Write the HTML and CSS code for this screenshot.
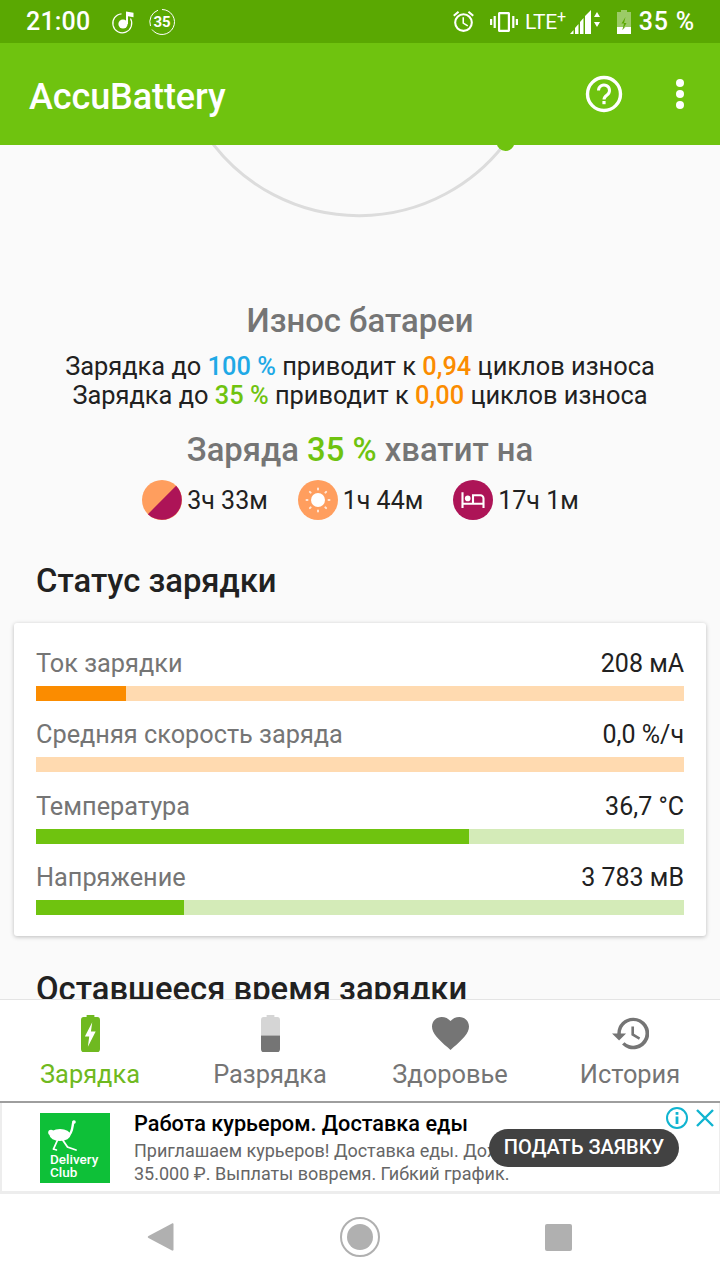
FILE: index.html
```html
<!DOCTYPE html>
<html lang="ru">
<head>
  <meta charset="UTF-8">
  <title>AccuBattery</title>
  <link rel="stylesheet" href="styles.css">
</head>
<body>
<div class="page">

  <!-- Status bar -->
  <div class="status-bar">
    <div class="status-left">
      <span class="clock">21:00</span>
      <svg class="note-icon" width="26" height="26" viewBox="0 0 26 26">
        <path d="M20.500 9.500A9.500 9.500 0 1 1 11.500 4.800" fill="none" stroke="#fff" stroke-width="1.200"/>
        <circle cx="13" cy="15" r="4.600" fill="#fff"/>
        <path d="M16 15V2.500l7.500 1.200v4.600l-5.500-1V15z" fill="#fff"/>
      </svg>
      <svg class="ring-icon" width="28" height="28" viewBox="0 0 28 28">
        <path d="M14 1.500A12.500 12.500 0 1 1 4 21.500M2.500 18A12.500 12.500 0 0 1 10 2.200" fill="none" stroke="#fff" stroke-width="1"/>
        <text x="14" y="19" text-anchor="middle" class="ring-num">35</text>
      </svg>
    </div>
    <div class="status-right">
      <svg width="25" height="25" viewBox="0 0 24 24" fill="#fff">
        <path d="M22 5.700l-4.600-3.900-1.300 1.500 4.600 3.900L22 5.700zM7.900 3.400L6.600 1.900 2 5.700l1.300 1.500 4.600-3.800zM12.500 8H11v6l4.700 2.900.8-1.200-4-2.400V8zM12 4a9 9 0 1 0 0 18 9 9 0 0 0 0-18zm0 16a7 7 0 1 1 0-14 7 7 0 0 1 0 14z"/>
      </svg>
      <svg class="vibrate" width="30" height="24" viewBox="0 0 30 24" fill="#fff">
        <path d="M10.500 2h9c.8 0 1.500.7 1.500 1.500v17c0 .8-.7 1.500-1.500 1.500h-9C9.700 22 9 21.300 9 20.500v-17C9 2.700 9.700 2 10.500 2zm.7 2.200v15.600h7.600V4.200z"/>
        <rect x="4.600" y="6" width="2.200" height="12"/><rect x="23.200" y="6" width="2.200" height="12"/>
        <rect x="1" y="9" width="2.200" height="6"/><rect x="26.800" y="9" width="2.200" height="6"/>
      </svg>
      <span class="lte">LTE<sup>+</sup></span>
      <svg class="signal" width="33" height="26" viewBox="0 0 33 26" fill="#fff">
        <path d="M1 25l3.500-4v4zM6 25v-6l3.500-4v10zM11 25V13l3.500-4v16zM16 25V7l6-6v24z"/>
        <path d="M28 3l3 5h-6zM28 18l-3-5h6z"/>
      </svg>
      <svg class="batt" width="14" height="26" viewBox="0 0 14 26">
        <path d="M4 1h6v2h4v22H0V3h4z" fill="#fff" fill-opacity=".4"/>
        <path d="M0 18h6l-.5 3 3-3H14v7H0z" fill="#fff"/>
        <path d="M8.500 8l-4 6.500h2.500L5.500 21l4-7H7z" fill="#5aa802"/>
      </svg>
      <span class="percent">35 %</span>
    </div>
  </div>

  <!-- App bar -->
  <div class="app-bar">
    <span class="app-title">AccuBattery</span>
    <div class="app-actions">
      <svg width="38" height="38" viewBox="0 0 38 38">
        <circle cx="19" cy="19" r="16.500" fill="none" stroke="#fff" stroke-width="3.400"/>
        <path d="M13.500 15.500a5.500 5.500 0 1 1 8.600 4.500c-1.700 1.200-3.100 2.200-3.100 4.500" fill="none" stroke="#fff" stroke-width="3"/>
        <rect x="17.400" y="26" width="3.200" height="3.200" fill="#fff"/>
      </svg>
      <div class="dots"><i></i><i></i><i></i></div>
    </div>
  </div>

  <!-- Scrolling content -->
  <div class="content">
    <div class="gauge">
      <svg width="720" height="76" viewBox="0 0 720 76">
        <path d="M213 -1A 184 184 0 0 0 506 -3" fill="none" stroke="#dcdcdc" stroke-width="3"/>
        <circle cx="505.500" cy="-3" r="9" fill="#6fc30f"/>
      </svg>
    </div>

    <h2 class="wear-title">Износ батареи</h2>
    <p class="wear-line">Зарядка до <b class="blue">100 %</b> приводит к <b class="orange">0,94</b> циклов износа</p>
    <p class="wear-line">Зарядка до <b class="green">35 %</b> приводит к <b class="orange">0,00</b> циклов износа</p>

    <h2 class="enough-title">Заряда <b class="green">35 %</b> хватит на</h2>
    <div class="times">
      <div class="time-item">
        <svg width="40" height="40" viewBox="0 0 40 40">
          <circle cx="20" cy="20" r="20" fill="#ff9e5e"/>
          <path d="M34.140 5.860A20 20 0 0 1 5.860 34.140z" fill="#ad1457"/>
        </svg>
        <span>3ч 33м</span>
      </div>
      <div class="time-item">
        <svg width="40" height="40" viewBox="0 0 40 40">
          <circle cx="20" cy="20" r="20" fill="#ff9e5e"/>
          <circle cx="20" cy="20" r="7" fill="#fff"/>
          <g stroke="#fff" stroke-width="2" stroke-linecap="round" opacity=".75">
            <path d="M20 8.500v1M20 30.500v1M8.500 20h1M30.500 20h1M11.900 11.900l.7.7M27.400 27.400l.7.7M11.900 28.100l.7-.7M27.400 12.600l.7-.7"/>
          </g>
        </svg>
        <span>1ч 44м</span>
      </div>
      <div class="time-item">
        <svg width="40" height="40" viewBox="0 0 40 40">
          <circle cx="20" cy="20" r="20" fill="#ad1457"/>
          <g transform="translate(7.400 6.900) scale(1.050)" fill="#fff">
            <circle cx="7" cy="11" r="2.700"/>
            <path d="M19 7h-8v8H3V5H1v15h2v-3h18v3h2v-9c0-2.210-1.790-4-4-4zm2 8h-8V9h6c1.100 0 2 .9 2 2v4z"/>
          </g>
        </svg>
        <span>17ч 1м</span>
      </div>
    </div>

    <h3 class="section-title">Статус зарядки</h3>
    <div class="card">
      <div class="stat">
        <div class="stat-row"><span class="stat-name">Ток зарядки</span><span class="stat-value">208 мА</span></div>
        <div class="bar bar-orange"><div class="fill" style="width: 13.900%"></div></div>
      </div>
      <div class="stat">
        <div class="stat-row"><span class="stat-name">Средняя скорость заряда</span><span class="stat-value">0,0 %/ч</span></div>
        <div class="bar bar-orange"><div class="fill" style="width: 0%"></div></div>
      </div>
      <div class="stat">
        <div class="stat-row"><span class="stat-name">Температура</span><span class="stat-value">36,7 °C</span></div>
        <div class="bar bar-green"><div class="fill" style="width: 66.800%"></div></div>
      </div>
      <div class="stat">
        <div class="stat-row"><span class="stat-name">Напряжение</span><span class="stat-value">3 783 мВ</span></div>
        <div class="bar bar-green"><div class="fill" style="width: 22.800%"></div></div>
      </div>
    </div>

    <h3 class="section-title next">Оставшееся время зарядки</h3>
  </div>

  <!-- Bottom tabs -->
  <div class="tabs">
    <div class="tab active">
      <svg width="19" height="37" viewBox="0 0 22 36" preserveAspectRatio="none">
        <path d="M6.500 0h9v2H19a3 3 0 0 1 3 3v28a3 3 0 0 1-3 3H3a3 3 0 0 1-3-3V5a3 3 0 0 1 3-3h3.500z" fill="#6fb920"/>
        <path d="M13 7L4.500 21h5L8 31l9-15h-5.500z" fill="#fff"/>
      </svg>
      <span>Зарядка</span>
    </div>
    <div class="tab">
      <svg width="19" height="37" viewBox="0 0 22 36" preserveAspectRatio="none">
        <path d="M6.500 0h9v2H19a3 3 0 0 1 3 3v15H0V5a3 3 0 0 1 3-3h3.500z" fill="#d5d5d5"/>
        <path d="M0 20h22v13a3 3 0 0 1-3 3H3a3 3 0 0 1-3-3z" fill="#757575"/>
      </svg>
      <span>Разрядка</span>
    </div>
    <div class="tab">
      <svg width="37" height="37" viewBox="0 0 38 38">
        <path d="M19 36l-2.700-2.500C6.500 24.700 0 18.800 0 11.700 0 6 4.400 2 10 2c3.500 0 6.900 1.600 9 4.200C21.100 3.600 24.500 2 28 2c5.600 0 10 4 10 9.700 0 7.100-6.500 13-16.300 21.800z" fill="#757575"/>
      </svg>
      <span>Здоровье</span>
    </div>
    <div class="tab">
      <svg width="37" height="37" viewBox="1 2 21 20" fill="#757575">
        <path d="M13 3a9 9 0 0 0-9 9H1l3.900 3.900.1.100L9 12H6a7 7 0 1 1 2.100 4.900l-1.400 1.400A9 9 0 1 0 13 3zm-1 5v5l4.300 2.500.7-1.200-3.500-2.100V8z"/>
      </svg>
      <span>История</span>
    </div>
  </div>

  <!-- Ad banner -->
  <div class="ad">
    <div class="ad-logo">
      <svg width="30" height="31" viewBox="0 0 30 31" fill="#fff">
        <ellipse cx="12" cy="15" rx="10.500" ry="6"/>
        <circle cx="3" cy="12.500" r="2.800"/>
        <circle cx="26" cy="2" r="1.800"/>
        <g fill="none" stroke="#fff" stroke-linecap="round">
          <path d="M25.500 2C24 6 25 13 20 16" stroke-width="2.400"/>
          <path d="M10 19L5.500 29" stroke-width="1.800"/>
          <path d="M14 19l5.500 8 8.500 3" stroke-width="1.800"/>
          <path d="M5.500 29l3 1" stroke-width="1.400"/>
        </g>
      </svg>
      <span class="ad-brand">Delivery<br>Club</span>
    </div>
    <div class="ad-text">
      <div class="ad-title">Работа курьером. Доставка еды</div>
      <div class="ad-desc">Приглашаем курьеров! Доставка еды. Доход от<br>35.000 ₽. Выплаты вовремя. Гибкий график.</div>
    </div>
    <div class="ad-marks">
      <svg width="24" height="24" viewBox="0 0 24 24">
        <circle cx="12" cy="12" r="10" fill="none" stroke="#10b4d0" stroke-width="2"/>
        <rect x="10.600" y="10.500" width="2.800" height="7.500" fill="#10b4d0"/>
        <rect x="10.600" y="6" width="2.800" height="2.800" fill="#10b4d0"/>
      </svg>
      <svg width="24" height="24" viewBox="0 0 24 24">
        <path d="M4 4l16 16M20 4L4 20" stroke="#10b4d0" stroke-width="2.400" fill="none"/>
      </svg>
    </div>
    <div class="ad-button">ПОДАТЬ ЗАЯВКУ</div>
  </div>

  <!-- Android nav bar -->
  <div class="nav-bar">
    <svg width="28" height="30" viewBox="0 0 28 30"><path d="M25 1.500c.8-.4 1.500 0 1.500 1v25c0 1-.7 1.400-1.500 1L1.500 16c-1-.6-1-1.400 0-2z" fill="#b0b0b0"/></svg>
    <svg width="40" height="40" viewBox="0 0 40 40">
      <circle cx="20" cy="20" r="19" fill="none" stroke="#b0b0b0" stroke-width="2"/>
      <circle cx="20" cy="20" r="13" fill="#b0b0b0"/>
    </svg>
    <div class="nav-square"></div>
  </div>
</div>
</body>
</html>
```

FILE: styles.css
```css
* { box-sizing: border-box; }
body {
  margin: 0;
  font-family: Roboto, "Noto Sans", sans-serif;
  background: #fafafa;
}
b { font-weight: 500; }
.page {
  width: 720px;
  height: 1280px;
  display: flex;
  flex-direction: column;
  overflow: hidden;
}

/* status bar */
.status-bar {
  height: 43px;
  flex: none;
  background: #5aa802;
  color: #fff;
  display: flex;
  justify-content: space-between;
  align-items: center;
  padding: 0 25px 0 26px;
}
.status-left, .status-right { display: flex; align-items: center; }
.clock { font-size: 25px; font-weight: 500; margin-right: 20px; letter-spacing: .2px; }
.ring-icon { margin-left: 12px; }
.ring-num { font-size: 15px; font-weight: 700; fill: #fff; font-family: Roboto, sans-serif; }
.vibrate { margin-left: 13px; }
.lte { font-size: 21px; margin-left: 6px; letter-spacing: -.3px; }
.lte sup { font-size: 16px; line-height: 0; vertical-align: 7px; }
.signal { margin-left: 3px; }
.batt { margin-left: 15px; }
.percent { font-size: 25px; font-weight: 500; margin-left: 8px; letter-spacing: .8px; }

/* app bar */
.app-bar {
  height: 102px;
  flex: none;
  background: #6fc30f;
  color: #fff;
  display: flex;
  justify-content: space-between;
  align-items: center;
  padding: 0 36px 0 29px;
  position: relative;
}
.app-title { font-size: 36px; font-weight: 500; padding-top: 5px; letter-spacing: -.1px; }
.app-actions { display: flex; align-items: center; gap: 53px; padding-bottom: 1px; }
.dots { display: flex; flex-direction: column; gap: 3px; }
.dots i { width: 8px; height: 8px; border-radius: 50%; background: #fff; display: block; }

/* content */
.content {
  flex: 1;
  min-height: 0;
  overflow: hidden;
  background: #fafafa;
  border-bottom: 1px solid #e4e4e4;
}
.gauge { height: 76px; }
.gauge svg { display: block; overflow: visible; }
.wear-title, .enough-title {
  margin: 0;
  text-align: center;
  color: #757575;
  font-weight: 500;
  font-size: 32.800px;
  line-height: 38px;
}
.wear-title { margin-top: 81px; margin-bottom: 12px; }
.wear-line {
  margin: 0;
  text-align: center;
  color: #212121;
  font-size: 25.400px;
  line-height: 29px;
}
.blue { color: #1fa9e6; }
.orange { color: #fb8c00; }
.green { color: #6fc30f; }
.enough-title { margin-top: 21px; }
.times {
  display: flex;
  justify-content: center;
  gap: 30px;
  margin-top: 11px;
  margin-left: 1px;
}
.time-item {
  display: flex;
  align-items: center;
  gap: 5px;
  font-size: 25px;
  color: #212121;
}
.section-title {
  margin: 41px 0 0 36px;
  font-size: 32.800px;
  line-height: 40px;
  font-weight: 500;
  color: #212121;
}
.section-title.next { margin-top: 33px; }

.card {
  margin: 22px 14px 0;
  padding: 19px 22px 21px;
  background: #fff;
  border-radius: 3px;
  box-shadow: 0 1px 4px rgba(0,0,0,.25);
}
.stat + .stat { margin-top: 12.330px; }
.stat-row {
  display: flex;
  justify-content: space-between;
  height: 37px;
  padding-top: 7px;
  line-height: 30px;
  font-size: 25.300px;
  margin-bottom: 7px;
}
.stat-name { color: #757575; }
.stat-value { color: #212121; font-size: 25px; }
.bar { height: 15px; }
.fill { height: 100%; }
.bar-orange { background: #ffdab0; }
.bar-orange .fill { background: #fb8c00; }
.bar-green { background: #d4ebb8; }
.bar-green .fill { background: #6fc30f; }

/* tabs */
.tabs {
  height: 103px;
  flex: none;
  background: #fff;
  display: flex;
  border-bottom: 2px solid #9e9e9e;
}
.tab {
  flex: 1;
  display: flex;
  flex-direction: column;
  align-items: center;
  padding-top: 15px;
  color: #757575;
  font-size: 25.400px;
  line-height: 30px;
}
.tab span { margin-top: 7px; }
.tab.active { color: #6fb920; }

/* ad */
.ad {
  height: 91px;
  flex: none;
  background: #fff;
  border: 3px solid #ededed;
  border-top: 0;
  border-left-width: 2px;
  border-right-width: 1px;
  position: relative;
  display: flex;
  padding-left: 38px;
  padding-top: 10px;
}
.ad-logo {
  width: 70px;
  height: 70px;
  background: #0ec038;
  color: #fff;
  display: flex;
  flex-direction: column;
  padding: 7px 0 0 10px;
  flex: none;
}
.ad-logo svg { margin-left: -2px; flex: none; }
.ad-brand { font-size: 13.500px; font-weight: 500; line-height: 13px; margin-top: 2px; }
.ad-text { margin-left: 24px; }
.ad-title { font-size: 21.700px; font-weight: 500; color: #000; line-height: 26px; margin-top: -2px; }
.ad-desc { font-size: 18px; color: #666; line-height: 23px; margin-top: 2px; white-space: nowrap; }
.ad-marks {
  position: absolute;
  top: 3px;
  right: 2px;
  display: flex;
  gap: 4px;
}
.ad-button {
  position: absolute;
  left: 487px;
  top: 26px;
  width: 190px;
  height: 38px;
  border-radius: 19px;
  background: #424242;
  color: #fff;
  font-size: 20px;
  font-weight: 500;
  line-height: 36px;
  text-align: center;
}

/* nav bar */
.nav-bar {
  height: 86px;
  flex: none;
  background: #fff;
  display: flex;
  justify-content: space-between;
  align-items: center;
  padding: 0 148px 0 147px;
}
.nav-square { width: 27px; height: 27px; border-radius: 2px; background: #b0b0b0; }
```
